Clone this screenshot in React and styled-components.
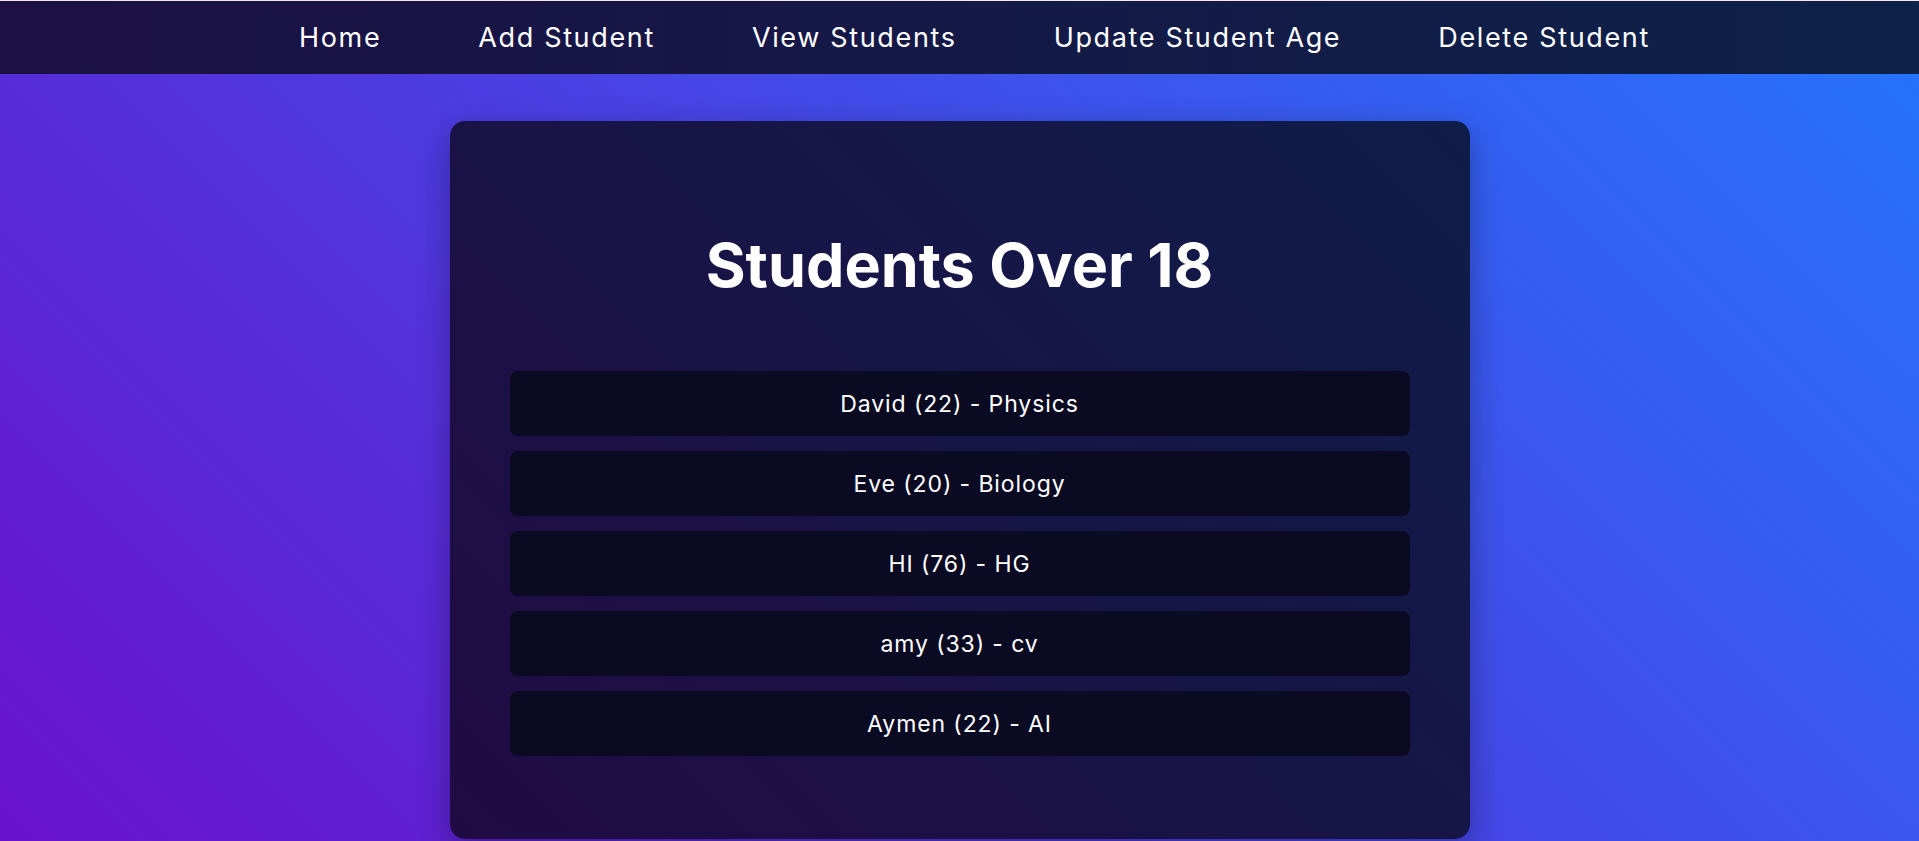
import styled, { createGlobalStyle } from "styled-components";

const GlobalStyle = createGlobalStyle`
  * {
    box-sizing: border-box;
  }

  html,
  body {
    margin: 0;
    padding: 0;
  }

  body {
    font-family: "Inter", "Noto Sans", sans-serif;
    color: #fff;
    min-height: 100vh;
    background: linear-gradient(45deg, #6a11cb, #2575fc);
  }
`;

const Page = styled.div`
  min-height: 100vh;
  border-top: 1px solid #f6e8ea;
  display: flex;
  flex-direction: column;
`;

const NavBar = styled.nav`
  height: 73px;
  background: linear-gradient(to right, #1c1045, #0d2248);
  display: flex;
  align-items: center;
  justify-content: center;
  padding-left: 30px;
`;

const NavList = styled.ul`
  list-style: none;
  margin: 0;
  padding: 0;
  display: flex;
  gap: 97px;
`;

const NavLink = styled.a`
  color: #fff;
  text-decoration: none;
  font-size: 27px;
  font-weight: 400;
  letter-spacing: 1.65px;
  cursor: pointer;
`;

const Main = styled.main`
  flex: 1;
  display: flex;
  justify-content: center;
  padding-top: 47px;
`;

const Card = styled.section`
  width: 1020px;
  padding: 40px 60px 83px;
  border-radius: 15px;
  background: linear-gradient(45deg, #210b44, #0f1d49);
  box-shadow: 0 10px 32px rgba(0, 0, 0, 0.3);
  align-self: flex-start;
`;

const Title = styled.h1`
  margin: 67px 0 69px;
  text-align: center;
  font-size: 61px;
  line-height: 74px;
  font-weight: 700;
  letter-spacing: 0;
  color: #fff;
`;

const StudentList = styled.ul`
  list-style: none;
  margin: 0;
  padding: 0;
  display: flex;
  flex-direction: column;
  gap: 15px;
`;

const StudentItem = styled.li`
  height: 65px;
  border-radius: 8px;
  background: #0b0a23;
  display: flex;
  align-items: center;
  justify-content: center;
  font-size: 23px;
  letter-spacing: 0.9px;
  color: #fff;
`;

const links = [
  "Home",
  "Add Student",
  "View Students",
  "Update Student Age",
  "Delete Student",
];

const students = [
  { name: "David", age: 22, major: "Physics" },
  { name: "Eve", age: 20, major: "Biology" },
  { name: "HI", age: 76, major: "HG" },
  { name: "amy", age: 33, major: "cv" },
  { name: "Aymen", age: 22, major: "AI" },
];

export default function App() {
  return (
    <>
      <GlobalStyle />
      <Page>
        <NavBar>
          <NavList>
            {links.map((label) => (
              <li key={label}>
                <NavLink>{label}</NavLink>
              </li>
            ))}
          </NavList>
        </NavBar>
        <Main>
          <Card>
            <Title>Students Over 18</Title>
            <StudentList>
              {students.map((s) => (
                <StudentItem key={s.name}>
                  {s.name} ({s.age}) - {s.major}
                </StudentItem>
              ))}
            </StudentList>
          </Card>
        </Main>
      </Page>
    </>
  );
}
